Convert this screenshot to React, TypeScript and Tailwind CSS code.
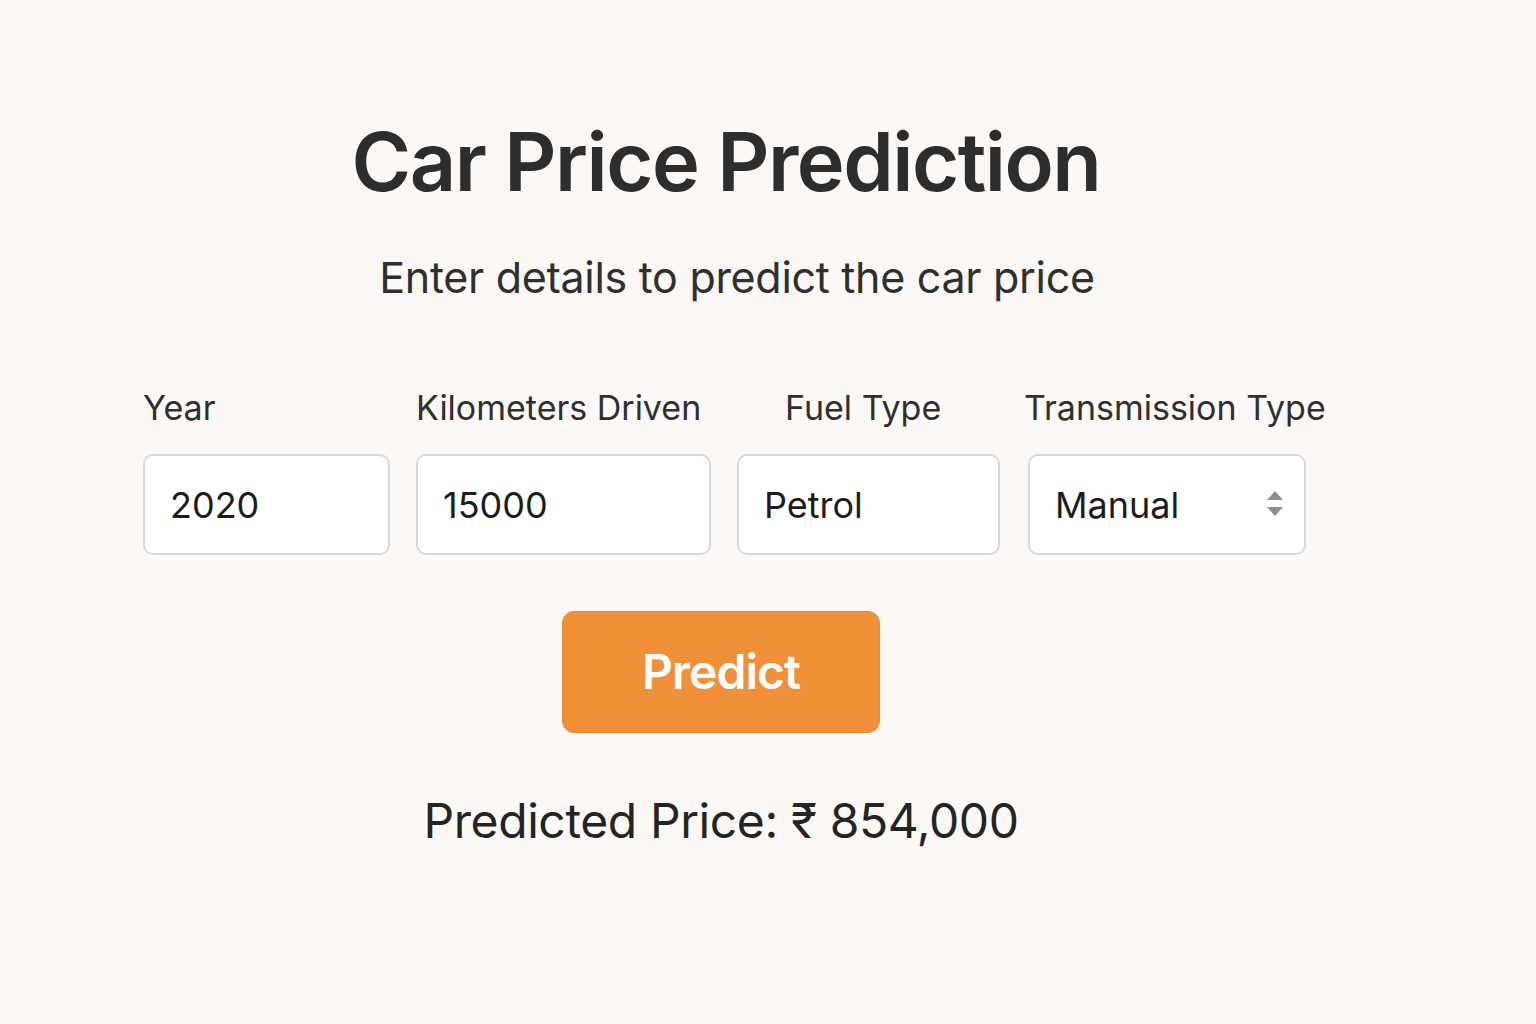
import { useState } from "react";

const fieldClass =
  "h-[101px] rounded-[10px] border-2 border-[#d5d9e0] bg-white pl-[25px] text-[36px] text-[#1c1c1c] outline-none font-['Inter',sans-serif]";

export default function App() {
  const [form, setForm] = useState({
    year: "2020",
    km: "15000",
    fuel: "Petrol",
    transmission: "Manual",
  });

  const handleChange = (
    e: React.ChangeEvent<HTMLInputElement | HTMLSelectElement>
  ) => {
    const { name, value } = e.target;
    setForm((prev) => ({ ...prev, [name]: value }));
  };

  return (
    <div className="min-h-screen w-full bg-[#fcf8f5] font-['Inter',sans-serif] text-[#2f2f2f]">
      <div className="ml-[143px] flex w-[1166px] flex-col items-center pt-[122px]">
        <h1 className="text-[81px] font-semibold leading-none tracking-[-1.5px] text-[#2d2d2d]">
          Car Price Prediction
        </h1>
        <p className="mt-[53px] pl-[22px] text-[43px] leading-none tracking-[-0.3px] text-[#2f2f2f]">
          Enter details to predict the car price
        </p>

        <div className="mt-[92px] flex w-full gap-[26px] self-start">
          <div className="flex w-[247px] flex-col gap-[29px]">
            <label className="text-[34px] leading-none">Year</label>
            <input
              name="year"
              value={form.year}
              onChange={handleChange}
              className={`${fieldClass} w-[247px]`}
            />
          </div>
          <div className="flex w-[295px] flex-col gap-[29px]">
            <label className="whitespace-nowrap text-[34px] leading-none">Kilometers Driven</label>
            <input
              name="km"
              value={form.km}
              onChange={handleChange}
              className={`${fieldClass} w-[295px]`}
            />
          </div>
          <div className="flex w-[263px] flex-col gap-[29px]">
            <label className="pl-[48px] whitespace-nowrap text-[34px] leading-none">Fuel Type</label>
            <input
              name="fuel"
              value={form.fuel}
              onChange={handleChange}
              className={`${fieldClass} w-[263px]`}
            />
          </div>
          <div className="ml-[2px] flex w-[278px] flex-col gap-[29px]">
            <label className="-ml-[4px] whitespace-nowrap text-[34px] leading-none">
              Transmission Type
            </label>
            <div className="relative w-[278px]">
              <select
                name="transmission"
                value={form.transmission}
                onChange={handleChange}
                className={`${fieldClass} w-[278px] appearance-none`}
              >
                <option>Manual</option>
                <option>Automatic</option>
              </select>
              <svg
                className="pointer-events-none absolute right-[22px] top-[36px]"
                width="18"
                height="28"
                viewBox="0 0 18 28"
              >
                <path d="M9 1 L17 10 L1 10 Z" fill="#8f8f8f" />
                <path d="M1 17 L17 17 L9 26 Z" fill="#8f8f8f" />
              </svg>
            </div>
          </div>
        </div>

        <button className="mt-[56px] mr-[10px] h-[122px] w-[318px] rounded-[12px] border border-[#ea8a30] bg-[#f0913a] text-[48px] font-semibold tracking-[-1px] text-white">
          Predict
        </button>

        <p className="mt-[64px] mr-[10px] text-[48px] leading-none tracking-[-0.4px] text-[#242424]">
          Predicted Price: ₹ 854,000
        </p>
      </div>
    </div>
  );
}
